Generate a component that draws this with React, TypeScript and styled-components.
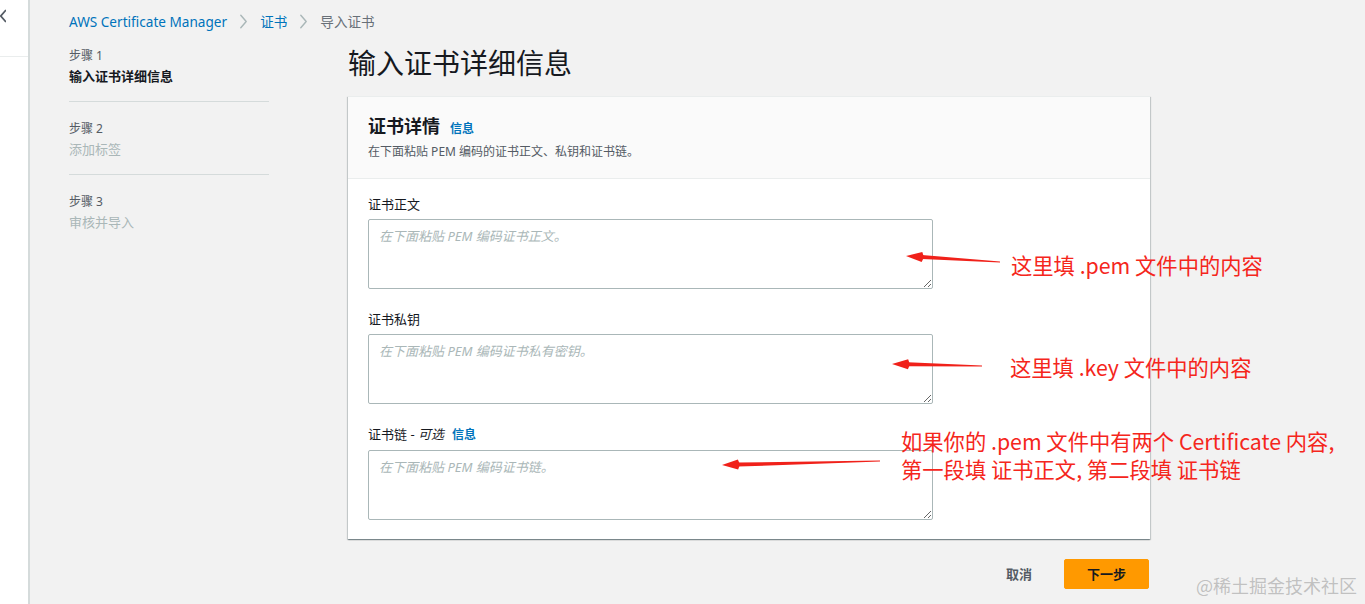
import React from 'react';
import styled, { createGlobalStyle } from 'styled-components';

const GlobalStyle = createGlobalStyle`
  html, body {
    margin: 0;
    padding: 0;
    background: #f2f2f2;
    font-family: "Noto Sans", "Noto Sans CJK SC", sans-serif;
    color: #16191f;
  }
  * { box-sizing: border-box; }
`;

const Page = styled.div`
  display: flex;
  width: 1365px;
  height: 604px;
  overflow: hidden;
  position: relative;
`;

const SideRail = styled.div`
  width: 30px;
  flex: none;
  background: #fff;
  border-right: 2px solid #d5dbdb;
  display: flex;
  flex-direction: column;
`;

const RailTop = styled.div`
  height: 57px;
  border-bottom: 1px solid #eaeded;
  padding-top: 9px;
  display: flex;
`;

const Content = styled.div`
  flex: 1;
  padding: 11px 0 0 39px;
`;

const Crumbs = styled.nav`
  display: flex;
  align-items: center;
  gap: 12px;
  font-size: 13.6px;
  height: 20px;
`;

const Crumb = styled.span<{ $current?: boolean }>`
  color: ${p => (p.$current ? '#687078' : '#0073bb')};
`;

const Layout = styled.div`
  display: grid;
  grid-template-columns: 200px 802px;
  column-gap: 79px;
  margin-top: 15px;
`;

const Steps = styled.ol`
  list-style: none;
  margin: 0;
  padding: 0;
`;

const Step = styled.li<{ $last?: boolean }>`
  padding: 1px 0 14px;
  margin-bottom: 17px;
  border-bottom: ${p => (p.$last ? 'none' : '1px solid #d5dbdb')};
`;

const StepNum = styled.div`
  font-size: 12px;
  color: #545b64;
  line-height: 18px;
`;

const StepName = styled.div<{ $active?: boolean }>`
  font-size: 13px;
  line-height: 22px;
  color: ${p => (p.$active ? '#16191f' : '#aab7b8')};
  font-weight: ${p => (p.$active ? 700 : 400)};
`;

const Main = styled.div`
  display: flex;
  flex-direction: column;
`;

const Title = styled.h1`
  margin: -1px 0 15px 0;
  font-size: 28px;
  font-weight: 400;
  line-height: 36px;
  color: #16191f;
`;

const Card = styled.section`
  background: #fff;
  box-shadow: 0 1px 1px 0 rgba(0, 28, 36, 0.3), 1px 1px 1px 0 rgba(0, 28, 36, 0.15),
    -1px 1px 1px 0 rgba(0, 28, 36, 0.15);
  border-top: 1px solid #eaeded;
`;

const CardHead = styled.header`
  background: #fafafa;
  border-bottom: 1px solid #eaeded;
  padding: 17px 20px 18px;
`;

const CardTitle = styled.h2`
  margin: 0;
  font-size: 18px;
  font-weight: 700;
  line-height: 24px;
  display: flex;
  align-items: baseline;
  gap: 10px;
`;

const InfoLink = styled.a`
  color: #0073bb;
  font-size: 12px;
  font-weight: 700;
  text-decoration: none;
`;

const CardDesc = styled.p`
  margin: 3px 0 0;
  font-size: 12px;
  line-height: 16px;
  color: #545b64;
`;

const CardBody = styled.div`
  padding: 14px 20px 19px;
  display: flex;
  flex-direction: column;
  gap: 19px;
`;

const Field = styled.div`
  display: flex;
  flex-direction: column;
`;

const Label = styled.label`
  font-size: 13px;
  line-height: 22px;
  color: #16191f;
  margin-bottom: 4px;
  display: flex;
  align-items: baseline;
  gap: 8px;
`;

const Optional = styled.i`
  font-style: italic;
`;

const Area = styled.textarea`
  width: 565px;
  height: 70px;
  border: 1px solid #aab7b8;
  border-radius: 2px;
  padding: 6px 10px;
  font-family: "Noto Sans", "Noto Sans CJK SC", sans-serif;
  font-size: 13px;
  color: #16191f;
  background: #fff;
  resize: vertical;
  &::placeholder {
    color: #aab7b8;
    font-style: italic;
  }
`;

const Actions = styled.div`
  display: flex;
  justify-content: flex-end;
  align-items: center;
  gap: 12px;
  margin-top: 19px;
  margin-right: 1px;
`;

const TextButton = styled.button`
  background: none;
  border: none;
  font-family: inherit;
  font-size: 13px;
  font-weight: 700;
  color: #545b64;
  padding: 6px 20px;
`;

const PrimaryButton = styled.button`
  background: #ff9900;
  border: 1px solid #ff9900;
  border-radius: 2px;
  font-family: inherit;
  font-size: 13px;
  font-weight: 700;
  color: #16191f;
  width: 85px;
  height: 30px;
`;

const Note = styled.div<{ $x: number; $y: number }>`
  position: absolute;
  left: ${p => p.$x}px;
  top: ${p => p.$y}px;
  color: #f5261c;
  font-family: "Noto Sans CJK SC", sans-serif;
  font-size: 21.3px;
  line-height: 28px;
  white-space: nowrap;
`;

const ArrowSvg = styled.svg`
  position: absolute;
  left: 0;
  top: 0;
  pointer-events: none;
`;

const Watermark = styled.div`
  position: absolute;
  right: 8px;
  bottom: 6px;
  font-family: "Noto Sans CJK SC", sans-serif;
  font-size: 18px;
  color: rgba(150, 150, 150, 0.55);
`;

const Chevron = ({ dir, color, w, h }: { dir: 'left' | 'right'; color: string; w: number; h: number }) => (
  <svg width={w} height={h} viewBox="0 0 10 16" fill="none">
    <path
      d={dir === 'right' ? 'M2 1 L8 8 L2 15' : 'M8 1 L2 8 L8 15'}
      stroke={color}
      strokeWidth={1.6}
      strokeLinecap="round"
      strokeLinejoin="round"
    />
  </svg>
);

const arrows: [number, number, number, number][] = [
  [1000, 262, 906, 256],
  [982, 366, 892, 364],
  [880, 461, 722, 465],
];

function Arrow({ x1, y1, x2, y2 }: { x1: number; y1: number; x2: number; y2: number }) {
  const dx = x1 - x2;
  const dy = y1 - y2;
  const len = Math.hypot(dx, dy);
  const ux = dx / len;
  const uy = dy / len;
  const nx = -uy;
  const ny = ux;
  const hx = x2 + ux * 16;
  const hy = y2 + uy * 16;
  const head = `M${x2},${y2} L${hx + nx * 5},${hy + ny * 5} L${hx + ux * 2},${hy + uy * 2} L${hx - nx * 5},${hy - ny * 5} Z`;
  const shaft = `M${hx},${hy - 2} L${x1},${y1 - 0.4} L${x1},${y1 + 0.4} L${hx},${hy + 2} Z`;
  return (
    <g fill="#f0211a">
      <path d={shaft} />
      <path d={head} />
    </g>
  );
}

export default function App() {
  return (
    <>
      <GlobalStyle />
      <Page>
        <SideRail>
          <RailTop>
            <svg width={6} height={14} viewBox="0 0 6 14">
              <path d="M6 1 L0.8 7 L6 13" stroke="#545b64" strokeWidth={1.8} fill="none" />
            </svg>
          </RailTop>
        </SideRail>
        <Content>
          <Crumbs>
            <Crumb>AWS Certificate Manager</Crumb>
            <Chevron dir="right" color="#aab7b8" w={9} h={15} />
            <Crumb>证书</Crumb>
            <Chevron dir="right" color="#aab7b8" w={9} h={15} />
            <Crumb $current>导入证书</Crumb>
          </Crumbs>
          <Layout>
            <Steps>
              <Step>
                <StepNum>步骤 1</StepNum>
                <StepName $active>输入证书详细信息</StepName>
              </Step>
              <Step>
                <StepNum>步骤 2</StepNum>
                <StepName>添加标签</StepName>
              </Step>
              <Step $last>
                <StepNum>步骤 3</StepNum>
                <StepName>审核并导入</StepName>
              </Step>
            </Steps>
            <Main>
              <Title>输入证书详细信息</Title>
              <Card>
                <CardHead>
                  <CardTitle>
                    证书详情 <InfoLink>信息</InfoLink>
                  </CardTitle>
                  <CardDesc>在下面粘贴 PEM 编码的证书正文、私钥和证书链。</CardDesc>
                </CardHead>
                <CardBody>
                  <Field>
                    <Label>证书正文</Label>
                    <Area placeholder="在下面粘贴 PEM 编码证书正文。" />
                  </Field>
                  <Field>
                    <Label>证书私钥</Label>
                    <Area placeholder="在下面粘贴 PEM 编码证书私有密钥。" />
                  </Field>
                  <Field>
                    <Label>
                      <span>
                        证书链 - <Optional>可选</Optional>
                      </span>
                      <InfoLink>信息</InfoLink>
                    </Label>
                    <Area placeholder="在下面粘贴 PEM 编码证书链。" />
                  </Field>
                </CardBody>
              </Card>
              <Actions>
                <TextButton>取消</TextButton>
                <PrimaryButton>下一步</PrimaryButton>
              </Actions>
            </Main>
          </Layout>
        </Content>

        <ArrowSvg width={1365} height={604}>
          {arrows.map(([x1, y1, x2, y2], i) => (
            <Arrow key={i} x1={x1} y1={y1} x2={x2} y2={y2} />
          ))}
        </ArrowSvg>
        <Note $x={1011} $y={251}>这里填 .pem 文件中的内容</Note>
        <Note $x={1010} $y={353}>这里填 .key 文件中的内容</Note>
        <Note $x={901} $y={427}>
          如果你的 .pem 文件中有两个 Certificate 内容,
          <br />
          第一段填 证书正文, 第二段填 证书链
        </Note>
        <Watermark>@稀土掘金技术社区</Watermark>
      </Page>
    </>
  );
}
